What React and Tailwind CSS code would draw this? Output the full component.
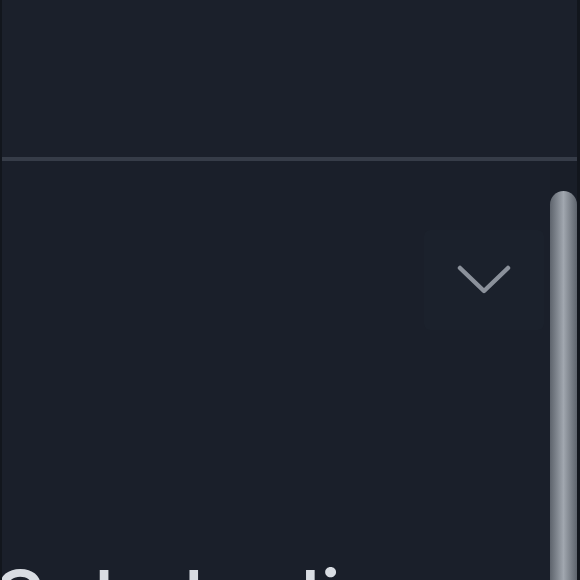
export default function App() {
  return (
    <div className="w-[580px] h-[580px] overflow-hidden bg-[#1a1f2a] flex flex-col border-l-[2px] border-l-[#12161d] border-r-[3px] border-r-[#12161d]" style={{ fontFamily: "Inter, 'Noto Sans', sans-serif" }}>
      <div className="h-[161px] shrink-0 bg-[#1b202b] border-b-[4px] border-b-[#363c48]" />
      <div className="flex-1 flex min-h-0">
        <div className="flex-1 flex flex-col min-w-0">
          <div className="flex justify-end pt-[69px] pr-[6px]">
            <button className="w-[120px] h-[100px] flex items-center justify-center bg-[#1b212c] rounded-md">
              <svg width="56" height="34" viewBox="0 0 56 34" fill="none">
                <path d="M4 5 L28 28 L52 5" stroke="#8b919b" strokeWidth="4.5" strokeLinecap="round" strokeLinejoin="round" />
              </svg>
            </button>
          </div>
          <div className="mt-[229px] -ml-[8px] text-[80px] leading-none font-medium text-[#d9dde3] whitespace-nowrap">
            Solo he lines
          </div>
        </div>
        <div className="w-[27px] shrink-0 flex justify-start pt-[30px] bg-[#191e28]">
          <div className="w-[15px] flex-1 rounded-t-full bg-gradient-to-r from-[#5e646d] via-[#a1a7af] to-[#5e646d]" />
        </div>
      </div>
    </div>
  );
}
